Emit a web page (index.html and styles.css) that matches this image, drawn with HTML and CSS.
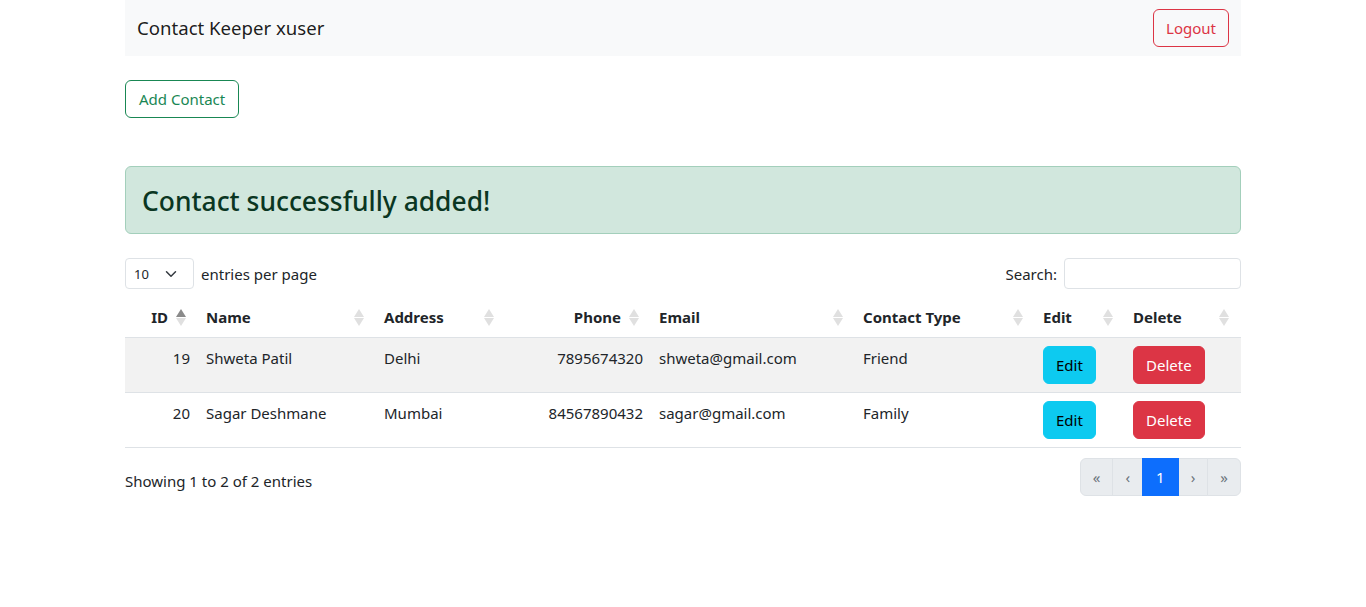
FILE: index.html
```html
<!DOCTYPE html>
<html lang="en">
<head>
<meta charset="utf-8">
<title>Contact Keeper</title>
<link rel="stylesheet" href="styles.css">
</head>
<body>
<div class="container">
  <nav class="navbar">
    <span class="brand">Contact Keeper xuser</span>
    <button class="btn btn-outline-danger">Logout</button>
  </nav>
  <main class="main">
    <div><button class="btn btn-outline-success">Add Contact</button></div>
    <div class="alert"><h3 class="alert-title">Contact successfully added!</h3></div>

    <div class="dt-top">
      <div class="dt-length">
        <div class="select">
          <span>10</span>
          <svg class="chev" width="12" height="12" viewBox="0 0 16 16"><path d="M2 5l6 6 6-6" fill="none" stroke="#343a40" stroke-width="2" stroke-linecap="round" stroke-linejoin="round"/></svg>
        </div>
        <span class="dt-label">entries per page</span>
      </div>
      <div class="dt-search">
        <span>Search:</span>
        <div class="search-input"></div>
      </div>
    </div>

    <table class="table">
      <colgroup>
        <col class="c-id"><col class="c-name"><col class="c-addr"><col class="c-phone"><col class="c-email"><col class="c-type"><col class="c-edit"><col class="c-del">
      </colgroup>
      <thead>
        <tr>
          <th class="num">ID<span class="order asc"></span></th>
          <th>Name<span class="order"></span></th>
          <th>Address<span class="order"></span></th>
          <th class="num">Phone<span class="order"></span></th>
          <th>Email<span class="order"></span></th>
          <th>Contact Type<span class="order"></span></th>
          <th>Edit<span class="order"></span></th>
          <th>Delete<span class="order"></span></th>
        </tr>
      </thead>
      <tbody>
        <tr class="odd">
          <td class="num">19</td>
          <td>Shweta Patil</td>
          <td>Delhi</td>
          <td class="num">7895674320</td>
          <td>shweta@gmail.com</td>
          <td>Friend</td>
          <td><button class="btn btn-info">Edit</button></td>
          <td><button class="btn btn-danger">Delete</button></td>
        </tr>
        <tr>
          <td class="num">20</td>
          <td>Sagar Deshmane</td>
          <td>Mumbai</td>
          <td class="num">84567890432</td>
          <td>sagar@gmail.com</td>
          <td>Family</td>
          <td><button class="btn btn-info">Edit</button></td>
          <td><button class="btn btn-danger">Delete</button></td>
        </tr>
      </tbody>
    </table>

    <div class="dt-bottom">
      <span class="dt-info">Showing 1 to 2 of 2 entries</span>
      <ul class="pagination">
        <li class="page disabled first">«</li>
        <li class="page disabled">‹</li>
        <li class="page active">1</li>
        <li class="page disabled">›</li>
        <li class="page disabled last">»</li>
      </ul>
    </div>
  </main>
</div>
</body>
</html>
```

FILE: styles.css
```css
* { box-sizing: border-box; }
body {
  margin: 0;
  font-family: "Noto Sans", "Open Sans", sans-serif;
  font-size: 15px;
  line-height: 24px;
  color: #212529;
  background: #fff;
}
.container {
  width: 1116px;
  margin: 0 auto;
}
.navbar {
  height: 56px;
  background: #f8f9fa;
  display: flex;
  align-items: center;
  justify-content: space-between;
  padding: 0 12px;
}
.brand {
  font-size: 18.6px;
  color: rgba(0,0,0,.9);
}
.btn {
  font-family: inherit;
  font-size: 15px;
  line-height: 24px;
  padding: 6px 12px;
  border: 1px solid transparent;
  border-radius: 6px;
  background: transparent;
  cursor: pointer;
}
.btn-outline-danger { color: #dc3545; border-color: #dc3545; }
.btn-outline-success { color: #198754; border-color: #198754; padding: 6px 13px; }
.btn-info { background: #0dcaf0; border-color: #0dcaf0; color: #000; }
.btn-danger { background: #dc3545; border-color: #dc3545; color: #fff; }
.main { padding-top: 24px; }
.alert {
  margin-top: 48px;
  padding: 16px;
  background: #d1e7dd;
  border: 1px solid #a3cfbb;
  border-radius: 6px;
  color: #0a3622;
}
.alert-title {
  margin: 0;
  font-size: 26.4px;
  font-weight: 500;
  line-height: 34px;
  padding-top: 1px;
  height: 34px;
}
.dt-top {
  margin-top: 24px;
  display: flex;
  justify-content: space-between;
  align-items: center;
  height: 31px;
}
.dt-length, .dt-search {
  display: flex;
  align-items: center;
}
.select {
  width: 69px;
  height: 31px;
  border: 1px solid #dee2e6;
  border-radius: 4px;
  display: flex;
  align-items: center;
  justify-content: space-between;
  padding: 0 16px 0 8px;
  font-size: 13px;
}
.dt-label { margin-left: 7px; }
.search-input {
  width: 177px;
  height: 31px;
  border: 1px solid #dee2e6;
  border-radius: 4px;
  margin-left: 7px;
}
.table {
  margin-top: 8px;
  width: 100%;
  border-collapse: collapse;
  table-layout: fixed;
  vertical-align: top;
}
.c-id { width: 73px; }
.c-name { width: 178px; }
.c-addr { width: 130px; }
.c-phone { width: 145px; }
.c-email { width: 204px; }
.c-type { width: 180px; }
.c-edit { width: 90px; }
.c-del { width: 116px; }
th, td {
  padding: 8px;
  border-bottom: 1px solid #dee2e6;
  text-align: left;
  vertical-align: top;
}
th {
  position: relative;
  font-weight: 700;
  padding-right: 30px;
}
th.num, td.num { text-align: right; }
tr.odd td { background: #f2f2f2; }
.order {
  position: absolute;
  right: 12px;
  top: 0;
  bottom: 0;
  width: 10px;
}
.order::before, .order::after {
  content: "";
  position: absolute;
  left: 0;
  border-left: 5px solid transparent;
  border-right: 5px solid transparent;
}
.order::before {
  top: 12px;
  border-bottom: 8px solid #e0e0e0;
}
.order::after {
  top: 21px;
  border-top: 8px solid #e0e0e0;
}
.order.asc::before { border-bottom-color: #8a8a8a; }
.dt-bottom {
  margin-top: 10px;
  display: flex;
  justify-content: space-between;
  align-items: flex-start;
}
.dt-info { margin-top: 11px; }
.pagination {
  display: flex;
  list-style: none;
  margin: 0;
  padding: 0;
}
.page {
  height: 38px;
  padding: 6px 12px;
  border: 1px solid #dee2e6;
  margin-left: -1px;
  font-size: 15px;
  line-height: 24px;
}
.page.disabled { background: #e9ecef; color: #6c757d; }
.page.active { background: #0d6efd; border-color: #0d6efd; color: #fff; position: relative; padding: 6px 13px; }
.page.first { border-radius: 6px 0 0 6px; margin-left: 0; }
.page.last { border-radius: 0 6px 6px 0; }
```
